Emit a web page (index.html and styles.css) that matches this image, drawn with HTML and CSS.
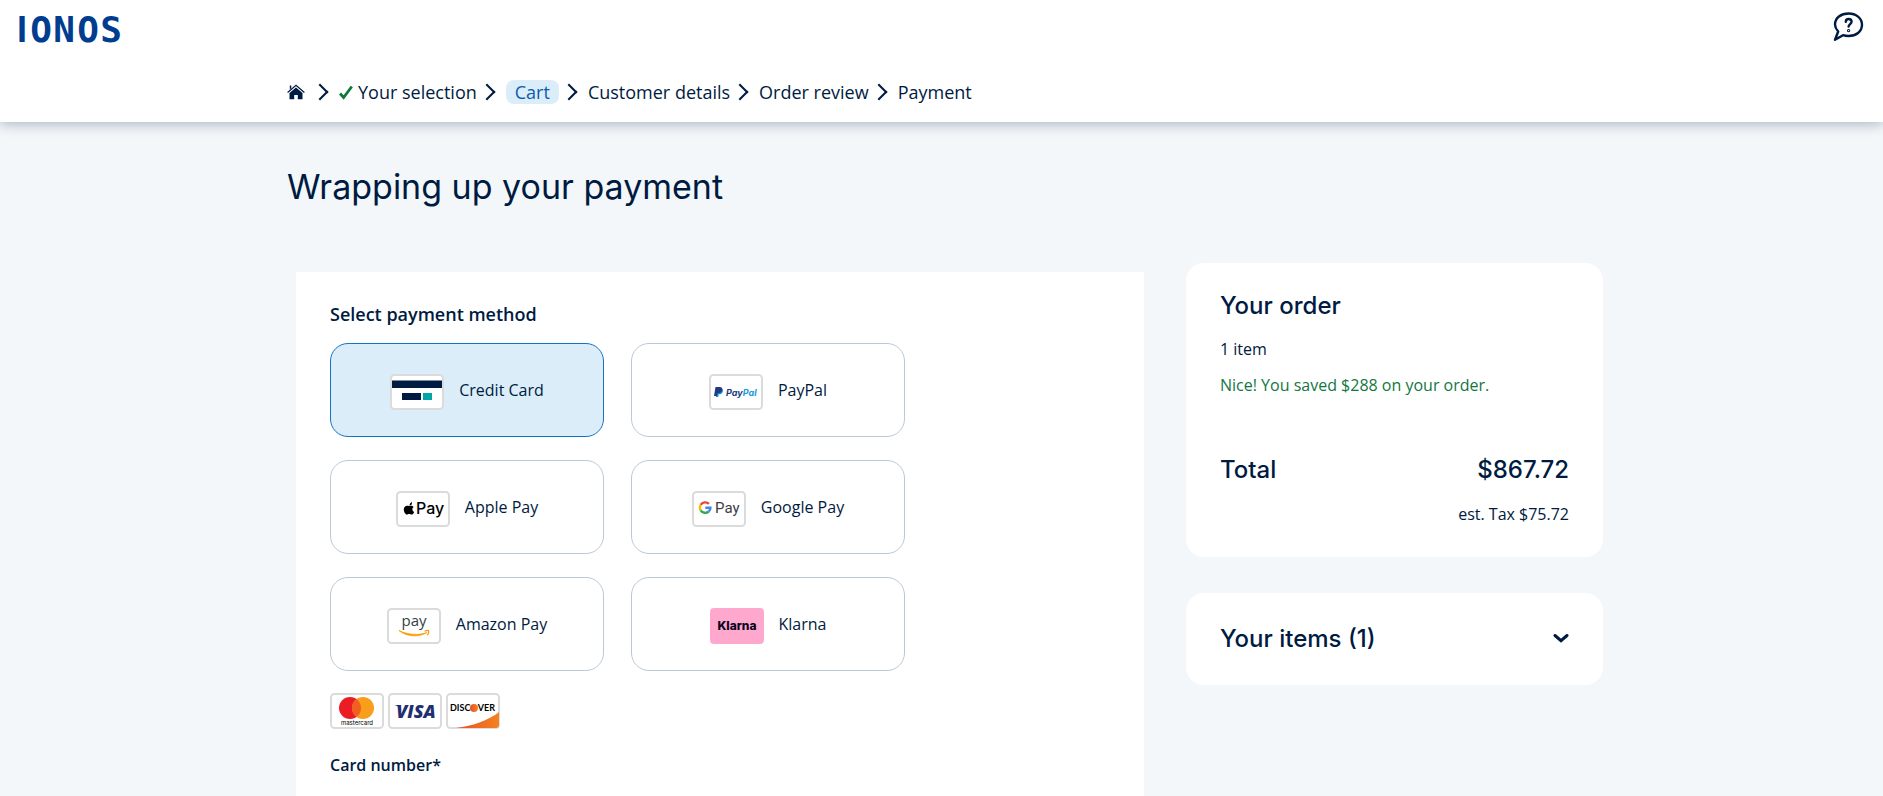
FILE: index.html
```html
<!DOCTYPE html>
<html lang="en">
<head>
    <meta charset="UTF-8">
    <meta name="viewport" content="width=device-width, initial-scale=1.0">
    <title>Payment - IONOS</title>
    <link rel="stylesheet" href="styles.css">
</head>
<body>
    <!-- Header -->
    <header class="header">
        <div class="topbar">
            <a class="logo" href="#" aria-label="IONOS">
                <svg width="106" height="32" viewBox="0 0 106 32">
                    <text x="5 24 47 71 94" y="30" text-anchor="middle"><tspan class="logo-i">I</tspan>ONOS</text>
                </svg>
            </a>
            <button class="help" type="button" aria-label="Help">
                <svg width="32" height="32" viewBox="0 0 32 32" fill="none" stroke="#001b41" stroke-width="2.4" stroke-linecap="round" stroke-linejoin="round">
                    <path d="M6.200 20.500C4 18 3 15.700 3 13.500C3 7 9 2.500 16.500 2.500S30 7 30 13.800S24 25 16.500 25C14.500 25 12.500 24.700 11 24.200L3 28.800L6.200 20.500Z"/>
                    <path d="M13.800 10.700C13.800 8.700 15.200 8 16.600 8C18.400 8 19.600 9.100 19.600 10.700C19.600 12.900 16.600 13.200 16.600 15.600"/>
                    <circle cx="16.600" cy="19.600" r="0.500"/>
                </svg>
            </button>
        </div>
        <nav class="container" aria-label="Order steps">
            <ol class="steps">
                <li class="home">
                    <a href="#" aria-label="Home">
                        <svg width="18" height="16" viewBox="0 0 18 16" fill="#001b41">
                            <path d="M9 3.400L2.500 9V15.300H7.200V11H10.800V15.300H15.500V9Z"/>
                            <path d="M2.800 5.500V1.500H4.300V4.300" />
                            <path d="M0.600 8.500L9 1.200L17.400 8.500" fill="none" stroke="#001b41" stroke-width="1.200"/>
                        </svg>
                    </a>
                </li>
                <li>
                    <a href="#">
                        <svg class="check" width="14" height="15" viewBox="0 0 14 15" fill="none" stroke="#0b7a3b" stroke-width="2.800">
                            <path d="M1 8.500L4.600 12.500L12.800 1.500"/>
                        </svg>
                        Your selection
                    </a>
                </li>
                <li><a class="current" href="#" aria-current="step">Cart</a></li>
                <li>Customer details</li>
                <li>Order review</li>
                <li>Payment</li>
            </ol>
        </nav>
    </header>

    <main class="container main">
        <h1>Wrapping up your payment</h1>

        <div class="columns">
            <!-- Payment form -->
            <form class="panel">
                <fieldset>
                    <legend>Select payment method</legend>
                    <div class="methods">
                        <label class="method">
                            <input type="radio" name="method" value="card" checked>
                            <svg width="54" height="36" viewBox="0 0 54 36">
                                <rect class="frame" x="1" y="1" width="52" height="34" rx="3.500"/>
                                <path d="M2 6.500H52V14H2Z" fill="#001b41"/>
                                <path d="M12 19H31V26H12Z" fill="#001b41"/>
                                <path d="M33 19H42V26H33Z" fill="#00a5a5"/>
                            </svg>
                            <span>Credit Card</span>
                        </label>
                        <label class="method">
                            <input type="radio" name="method" value="paypal">
                            <svg width="54" height="36" viewBox="0 0 54 36">
                                <rect class="frame" x="1" y="1" width="52" height="34" rx="3.500"/>
                                <path d="M7.500 14.500H12C14 14.500 14.700 16.500 13.500 18.500C12.800 19.900 11.500 20.300 9.800 20.300L9.200 23H6.800Z" fill="#139ad6"/>
                                <path d="M6.500 13H10.800C13.200 13 13.700 15 13 16.800C12.300 18.700 10.900 19.300 8.500 19.300L7.900 22H5Z" fill="#253b80"/>
                                <text class="paypal" x="17" y="21.500" fill="#253b80">Pay<tspan fill="#179bd7">Pal</tspan></text>
                            </svg>
                            <span>PayPal</span>
                        </label>
                        <label class="method">
                            <input type="radio" name="method" value="applepay">
                            <svg width="54" height="36" viewBox="0 0 54 36">
                                <rect class="frame" x="1" y="1" width="52" height="34" rx="3.500"/>
                                <path d="M15.500 13.800C15 14.300 14.400 14.500 13.600 14.400C13.500 12.800 14.500 11.500 15.900 10.900C16.100 12.100 15.900 13 15.500 13.800Z"/>
                                <path d="M13.200 15.100C14.200 14.500 16.500 14.200 17.700 16C15.700 17.200 16 19.900 18.200 20.900C17.600 22.500 16.500 23.600 15.500 23.600C14.700 23.600 14.200 23.100 13.200 23.100S11.700 23.600 11 23.600C9.500 23.600 7.800 20.900 7.800 18.500C7.800 15.300 10.500 13.800 13.200 15.100Z"/>
                                <text class="applepay" x="20" y="23">Pay</text>
                            </svg>
                            <span>Apple Pay</span>
                        </label>
                        <label class="method">
                            <input type="radio" name="method" value="googlepay">
                            <svg width="54" height="36" viewBox="0 0 54 36">
                                <rect class="frame" x="1" y="1" width="52" height="34" rx="3.500"/>
                                <g fill="none" stroke-width="2.400">
                                    <path d="M8.700 13.900A5.200 5.200 0 0 1 16.900 12.900" stroke="#ea4335"/>
                                    <path d="M8.700 19.300A5.200 5.200 0 0 1 8.700 13.900" stroke="#fbbc04"/>
                                    <path d="M16.700 20.500A5.200 5.200 0 0 1 8.700 19.300" stroke="#34a853"/>
                                    <path d="M13.300 16.800H18.400C18.400 18.300 17.800 19.600 16.700 20.500" stroke="#4285f4"/>
                                </g>
                                <text class="googlepay" x="23" y="22">Pay</text>
                            </svg>
                            <span>Google Pay</span>
                        </label>
                        <label class="method">
                            <input type="radio" name="method" value="amazonpay">
                            <svg width="54" height="36" viewBox="0 0 54 36">
                                <rect class="frame" x="1" y="1" width="52" height="34" rx="3.500"/>
                                <text class="amazonpay" x="27" y="18" text-anchor="middle">pay</text>
                                <path d="M12 22.500C19 28.500 31 29.800 39.800 24.600C33 27.400 21 27.200 12 22.500Z" fill="#ff9900" stroke="#ff9900" stroke-width="0.800"/>
                                <path d="M37.600 23.200C39.500 22.400 41 22.300 41.700 22.700C42.100 23.800 41.500 25.600 40.400 27.200" fill="none" stroke="#ff9900" stroke-width="1.300"/>
                            </svg>
                            <span>Amazon Pay</span>
                        </label>
                        <label class="method">
                            <input type="radio" name="method" value="klarna">
                            <svg width="54" height="36" viewBox="0 0 54 36">
                                <rect width="54" height="36" rx="4" fill="#ffa8cd"/>
                                <text class="klarna" x="27" y="22" text-anchor="middle">Klarna</text>
                            </svg>
                            <span>Klarna</span>
                        </label>
                    </div>
                </fieldset>

                <!-- Accepted cards -->
                <div class="brands">
                    <svg width="54" height="36" viewBox="0 0 54 36" role="img" aria-label="Mastercard">
                        <rect class="frame" x="1" y="1" width="52" height="34" rx="3.500"/>
                        <circle cx="20" cy="15" r="11" fill="#ec1c24"/>
                        <circle cx="33" cy="15" r="11" fill="#f79e1b"/>
                        <path d="M26.500 6.100A11 11 0 0 1 26.500 23.900A11 11 0 0 1 26.500 6.100Z" fill="#f16022"/>
                        <text class="mastercard" x="27" y="32" text-anchor="middle">mastercard</text>
                    </svg>
                    <svg width="54" height="36" viewBox="0 0 54 36" role="img" aria-label="Visa">
                        <rect class="frame" x="1" y="1" width="52" height="34" rx="3.500"/>
                        <text class="visa" x="28" y="25" text-anchor="middle">VISA</text>
                        <path d="M6.500 12H11.500L13.500 17C12 14.500 9.500 13 6.500 12Z" fill="#1f3070"/>
                    </svg>
                    <svg width="54" height="36" viewBox="0 0 54 36" role="img" aria-label="Discover">
                        <defs>
                            <linearGradient id="swoosh">
                                <stop offset="0" stop-color="#e4502a"/>
                                <stop offset="1" stop-color="#f58220"/>
                            </linearGradient>
                        </defs>
                        <rect class="frame" x="1" y="1" width="52" height="34" rx="3.500"/>
                        <text class="discover" x="4" y="18">DISC</text>
                        <circle cx="28" cy="15" r="4" fill="url(#swoosh)"/>
                        <text class="discover" x="49" y="18" text-anchor="end">VER</text>
                        <path d="M10 35C27 33 43 27 53 19V32Q53 35 50 35Z" fill="url(#swoosh)"/>
                    </svg>
                </div>

                <div class="field">
                    <label for="cardNumber">Card number*</label>
                    <input type="text" id="cardNumber" name="cardNumber" inputmode="numeric" required>
                </div>
            </form>

            <!-- Order summary -->
            <aside class="sidebar">
                <section class="card">
                    <h2>Your order</h2>
                    <p>1 item</p>
                    <p class="saved">Nice! You saved $288 on your order.</p>
                    <div class="total">
                        <span>Total</span>
                        <span>$867.72</span>
                    </div>
                    <p class="tax">est. Tax $75.72</p>
                </section>
                <button class="card items" type="button" aria-expanded="false">
                    <span>Your items (1)</span>
                    <svg width="16" height="10" viewBox="0 0 16 10" fill="none" stroke="#001b41" stroke-width="3">
                        <path d="M2 1.500L8 6.700L14 1.500" stroke-linecap="round"/>
                    </svg>
                </button>
            </aside>
        </div>
    </main>
</body>
</html>
```

FILE: styles.css
```css
* {
    box-sizing: border-box;
}
html {
    scrollbar-width: none;
}
body {
    margin: 0;
    height: 100vh;
    overflow-y: auto;
    scrollbar-width: none;
    background: #f3f7fa;
    color: #001b41;
    font-family: "Open Sans", "Noto Sans", sans-serif;
    font-size: 16px;
    line-height: 24px;
}
a {
    color: inherit;
    text-decoration: none;
}
button {
    border: none;
    background: none;
    color: inherit;
    cursor: pointer;
}
svg {
    display: block;
    flex-shrink: 0;
}
.container {
    max-width: 1323px;
    margin: 0 auto;
    padding-left: 7px;
}

/* header */
.header {
    background: white;
    height: 122px;
    box-shadow: 0 2px 12px rgba(0, 27, 65, 0.3);
}
.topbar {
    display: flex;
    justify-content: space-between;
    padding: 11px 19px 0 17px;
    height: 80px;
}
.logo {
    padding-top: 1px;
}
.logo svg {
    overflow: visible;
}
.logo text {
    font: bold 36px "DejaVu Sans Mono", monospace;
    fill: #003d8f;
}
.logo .logo-i {
    font-family: "Liberation Sans", sans-serif;
}
.help {
    align-self: flex-start;
    padding: 0;
}
.steps {
    display: flex;
    align-items: center;
    margin: 0;
    padding: 0;
    list-style: none;
    font-size: 18px;
}
.steps li {
    display: flex;
    align-items: center;
}
.steps li + li::before {
    content: "";
    width: 10px;
    height: 10px;
    margin: 0 13px 0 4px;
    border: solid #001b41;
    border-width: 2px 2px 0 0;
    transform: rotate(45deg);
}
.steps a {
    display: flex;
    align-items: center;
}
.steps .home {
    padding-right: 5px;
}
.check {
    margin-right: 5px;
}
.steps .current {
    padding: 0 9px;
    border-radius: 8px;
    background: #dbedf8;
    color: #095bb1;
}

/* content */
h1 {
    margin: 0;
    padding: 38px 0 49px;
    font: 400 34px/54px Inter, Roboto, sans-serif;
}
.columns {
    display: grid;
    grid-template-columns: 1fr 417px;
    gap: 42px;
}
.panel {
    margin: 9px 0 0 9px;
    padding: 30px 34px;
    background: white;
}
fieldset {
    margin: 0;
    padding: 0;
    border: none;
}
legend {
    padding: 0;
    margin-bottom: 17px;
    font-size: 18px;
    font-weight: 600;
}
.methods {
    display: grid;
    grid-template-columns: 274px 274px;
    gap: 23px 27px;
}
.method {
    display: flex;
    align-items: center;
    justify-content: center;
    gap: 15px;
    height: 94px;
    border: 1px solid #bcc8d4;
    border-radius: 18px;
    cursor: pointer;
}
.method:has(input:checked) {
    border-color: #1474c4;
    background: #dbedf8;
}
.method input {
    position: absolute;
    opacity: 0;
}
.method svg {
    margin-top: 3px;
}
.frame {
    fill: white;
    stroke: #dbdbdb;
    stroke-width: 2;
}
.paypal {
    font: italic bold 9px Inter, sans-serif;
}
.applepay {
    font: 500 16px Inter, sans-serif;
}
.googlepay {
    font: 400 15px Roboto, sans-serif;
    fill: #3c4043;
}
.amazonpay {
    font: 400 15px "Open Sans", sans-serif;
    fill: #333e48;
}
.klarna {
    font: 800 12px Inter, sans-serif;
    fill: #0b051d;
}
.mastercard {
    font: 6px Inter, sans-serif;
}
.visa {
    font: italic 800 18px "Open Sans", sans-serif;
    fill: #1f3070;
}
.discover {
    font: bold 9px Lato, sans-serif;
}
.brands {
    display: flex;
    gap: 4px;
    margin: 22px 0 24px;
}
.field label {
    display: block;
    font-weight: 600;
}
.field input {
    width: 274px;
    height: 48px;
    margin-top: 24px;
    padding: 0 16px;
    border: 1px solid #bcc8d4;
    border-radius: 8px;
    font: inherit;
}

/* order summary */
.sidebar {
    display: flex;
    flex-direction: column;
    align-self: start;
    gap: 36px;
}
.card {
    padding: 31px 34px;
    border-radius: 18px;
    background: white;
}
.card h2,
.total,
.items {
    margin: 0;
    font: 500 24px/24px Inter, Roboto, sans-serif;
}
.card p {
    margin: 12px 0 0;
}
.card h2 + p {
    margin-top: 19px;
}
.card .saved {
    color: #12773f;
}
.card .total {
    margin-top: 61px;
}
.total {
    display: flex;
    justify-content: space-between;
}
.card .tax {
    margin-top: 20px;
    text-align: right;
}
.items {
    display: flex;
    align-items: center;
    justify-content: space-between;
    padding: 34px;
}
```
